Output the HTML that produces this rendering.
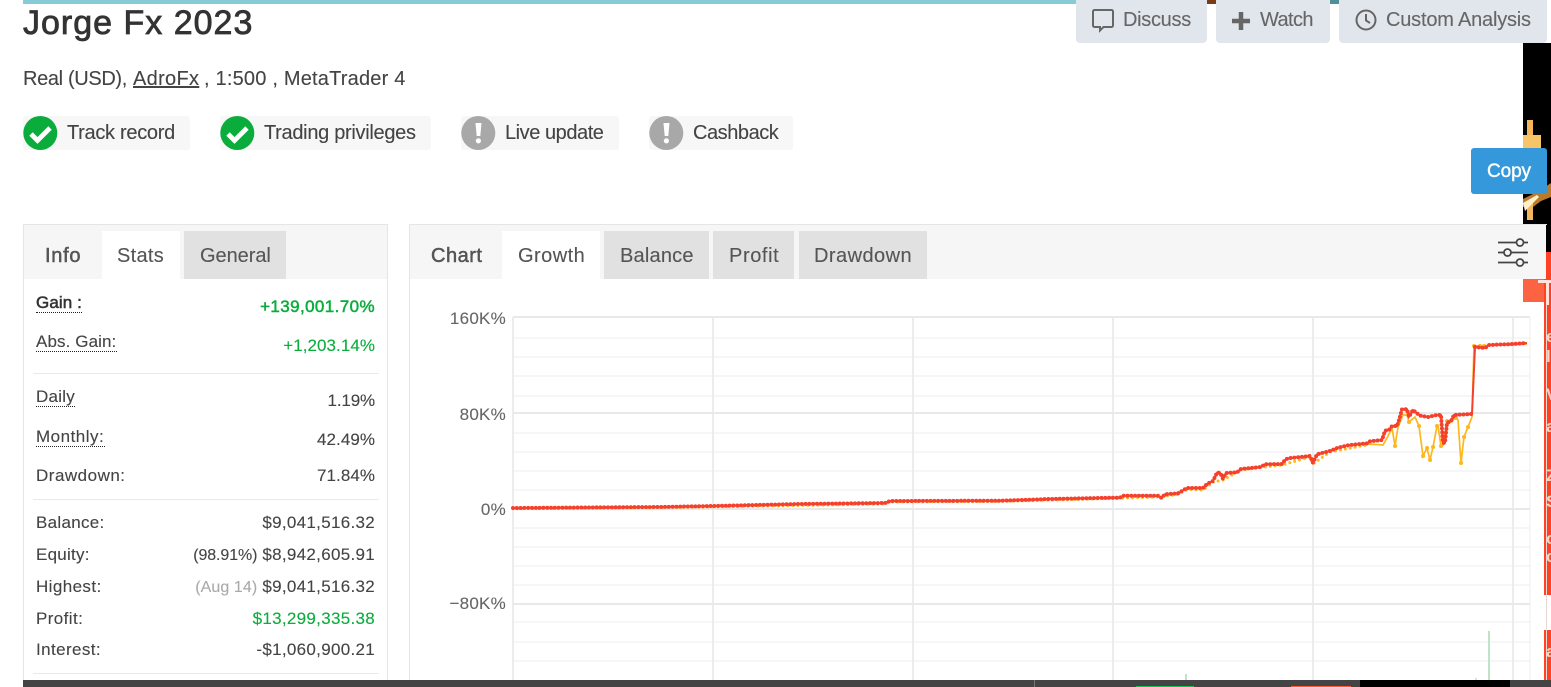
<!DOCTYPE html>
<html><head><meta charset="utf-8"><title>Jorge Fx 2023</title>
<style>
html,body{margin:0;padding:0;background:#fff}
body{width:1551px;height:687px;position:relative;overflow:hidden;font-family:"Liberation Sans",sans-serif;color:#444}
.a{position:absolute}
.t{position:absolute;white-space:nowrap;line-height:24px;height:24px;font-size:17px;letter-spacing:.25px;-webkit-text-stroke:.12px currentColor}
.r{text-align:right}
.m{-webkit-text-stroke:.5px currentColor}
.u{position:absolute;height:0;border-top:1.5px dotted #222}
.g{color:#0aad3c}
.btn{position:absolute;top:-4px;height:47px;background:#e1e6ec;border-radius:4px}
.bt{color:#666;font-size:20px}
.pill{position:absolute;top:116px;height:34px;background:#f7f7f7;border-radius:3px}
.ic{position:absolute;top:116px}
.tab{position:absolute;top:231px;height:48px}
.tl{font-size:20px;color:#555}
.hr{position:absolute;height:1px;background:#e9e9e9;left:33px;width:346px}
.yl{color:#666;font-size:17px;right:1045px}
.lt{position:absolute;left:0;font-size:17px;line-height:18px;color:#ffd0c0;font-weight:bold}
</style></head><body>

<!-- top strip -->
<div class="a" style="left:23px;top:0;width:1053px;height:4px;background:#86ccd6"></div>
<div class="a" style="left:1207px;top:0;width:9px;height:4px;background:#7a3b17"></div>
<div class="a" style="left:1330px;top:0;width:9px;height:4px;background:#4f8f96"></div>

<!-- right ad strip -->
<div class="a" style="left:1523px;top:43px;width:28px;height:209px;background:#000"></div>
<div class="a" style="left:1523px;top:252px;width:28px;height:50px;background:#fc6343"></div>
<div class="a" style="left:1544px;top:252px;width:7px;height:343px;background:#ff4322"></div>
<div class="a" style="left:1544px;top:630px;width:7px;height:50px;background:#ff4322"></div>
<div class="a" style="left:1546px;top:302px;width:5px;height:378px;overflow:hidden">
  <div class="lt" style="top:26px">e</div>
  <div class="lt" style="top:46px">l</div>
  <div class="lt" style="top:84px">V</div>
  <div class="lt" style="top:116px">a</div>
  <div class="lt" style="top:165px">Z</div>
  <div class="lt" style="top:191px">S</div>
  <div class="lt" style="top:228px">o</div>
  <div class="lt" style="top:246px">c</div>
  <div class="lt" style="top:341px">a</div>
</div>
<div class="a" style="left:1546px;top:302px;width:1px;height:378px;background:#e8d8d4"></div>
<div class="a" style="left:1538px;top:280px;width:13px;height:3px;background:#ffe3da"></div>
<div class="a" style="left:1546px;top:280px;width:3px;height:25px;background:#ffe3da"></div>
<!-- candles -->
<svg class="a" style="left:1523px;top:115px" width="28" height="110" viewBox="0 0 28 110">
<path d="M4 5h6v15H4z" fill="#f3b65a"/>
<path d="M0 20h18v16H0z" fill="#f8c468"/>
<path d="M28 68L16 76L0 84V92H4V105H10V92L18 86L28 82z" fill="#b97a2a"/>
<path d="M4 88H10V105H4z" fill="#f3b65a"/>
<path d="M0 88L14 80L16 82L2 96z" fill="#fff0c8"/>
</svg>

<!-- title -->
<div class="t" style="left:23px;top:2px;height:42px;line-height:42px;font-size:34px;color:#333;letter-spacing:1px;-webkit-text-stroke:.8px #333">Jorge Fx 2023</div>
<div class="t" style="left:23px;top:67px;font-size:20px;color:#444;letter-spacing:-.35px">Real (USD),</div>
<div class="t" style="left:133px;top:67px;font-size:20px;color:#444;letter-spacing:.3px;text-decoration:underline">AdroFx</div>
<div class="t" style="left:204px;top:67px;font-size:20px;color:#444;letter-spacing:.2px">, 1:500 , MetaTrader 4</div>

<!-- buttons -->
<div class="btn" style="left:1076px;width:131px"></div>
<div class="btn" style="left:1216px;width:114px"></div>
<div class="btn" style="left:1339px;width:208px"></div>
<svg class="a" style="left:1090px;top:7px" width="26" height="26" viewBox="0 0 26 26"><path d="M4.500 3h17a1.500 1.500 0 0 1 1.500 1.500v14a1.500 1.500 0 0 1-1.500 1.500H13.500l-3.500 3.500V20H4.500A1.500 1.500 0 0 1 3 18.500v-14A1.500 1.500 0 0 1 4.500 3z" fill="none" stroke="#666" stroke-width="2"/></svg>
<div class="t bt" style="left:1123px;top:8px;letter-spacing:-.3px">Discuss</div>
<svg class="a" style="left:1231px;top:10.500px" width="20" height="20" viewBox="0 0 20 20"><path d="M10 1v18M1 10h18" stroke="#666" stroke-width="4.500" fill="none"/></svg>
<div class="t bt" style="left:1260px;top:8px;letter-spacing:-.6px">Watch</div>
<svg class="a" style="left:1354px;top:8px" width="24" height="24" viewBox="0 0 24 24"><circle cx="12" cy="12" r="9.500" fill="none" stroke="#666" stroke-width="2"/><path d="M12 6v6.500l4 2.500" fill="none" stroke="#666" stroke-width="2"/></svg>
<div class="t bt" style="left:1386px;top:8px;letter-spacing:-.2px">Custom Analysis</div>

<!-- copy -->
<div class="a" style="left:1471px;top:148px;width:76px;height:46px;background:#3498db;border-radius:3px"></div>
<div class="t" style="left:1487px;top:160px;font-size:19px;color:#fff;letter-spacing:-.1px;-webkit-text-stroke:.4px #fff">Copy</div>

<!-- badges -->
<div class="pill" style="left:23px;width:167px"></div>
<div class="pill" style="left:220px;width:211px"></div>
<div class="pill" style="left:461px;width:158px"></div>
<div class="pill" style="left:649px;width:144px"></div>
<svg class="ic" style="left:23px" width="35" height="35" viewBox="0 0 35 35"><circle cx="17.300" cy="17" r="17" fill="#0aad3c"/><path d="M8 18l6.500 6.500L27 12" fill="none" stroke="#fff" stroke-width="4.800"/></svg>
<svg class="ic" style="left:220px" width="35" height="35" viewBox="0 0 35 35"><circle cx="17.300" cy="17" r="17" fill="#0aad3c"/><path d="M8 18l6.500 6.500L27 12" fill="none" stroke="#fff" stroke-width="4.800"/></svg>
<svg class="ic" style="left:461px" width="35" height="35" viewBox="0 0 35 35"><circle cx="17.300" cy="17" r="17" fill="#a8a8a8"/><path d="M14.500 7h6l-1.200 13h-3.600z" fill="#fff"/><circle cx="17.400" cy="24.800" r="2.600" fill="#fff"/></svg>
<svg class="ic" style="left:649px" width="35" height="35" viewBox="0 0 35 35"><circle cx="17.300" cy="17" r="17" fill="#a8a8a8"/><path d="M14.500 7h6l-1.200 13h-3.600z" fill="#fff"/><circle cx="17.400" cy="24.800" r="2.600" fill="#fff"/></svg>
<div class="t" style="left:67px;top:121px;font-size:20px;letter-spacing:-.3px">Track record</div>
<div class="t" style="left:264px;top:121px;font-size:20px;letter-spacing:-.3px">Trading privileges</div>
<div class="t" style="left:505px;top:121px;font-size:20px;letter-spacing:-.45px">Live update</div>
<div class="t" style="left:693px;top:121px;font-size:20px;letter-spacing:-.45px">Cashback</div>

<!-- left panel -->
<div class="a" style="left:23px;top:224px;width:363px;height:460px;border:1px solid #e5e5e5;background:#fff"></div>
<div class="a" style="left:24px;top:225px;width:363px;height:54px;background:#f6f6f6"></div>
<div class="tab" style="left:102px;width:78px;background:#fff"></div>
<div class="tab" style="left:184px;width:102px;background:#e1e1e1"></div>
<div class="t tl m" style="left:45px;top:244px;letter-spacing:.7px">Info</div>
<div class="t tl" style="left:117px;top:244px;letter-spacing:.3px">Stats</div>
<div class="t tl" style="left:200px;top:244px;letter-spacing:-.05px">General</div>

<div class="t" style="left:36px;top:291px;color:#333;letter-spacing:.1px;-webkit-text-stroke:.55px #333">Gain :</div>
<div class="u" style="left:36px;top:312px;width:46px"></div>
<div class="t r g m" style="right:1176px;top:295px;letter-spacing:.4px">+139,001.70%</div>
<div class="t" style="left:36px;top:330px;letter-spacing:.1px">Abs. Gain:</div>
<div class="u" style="left:36px;top:351px;width:81px"></div>
<div class="t r g" style="right:1176px;top:334px;letter-spacing:.05px">+1,203.14%</div>
<div class="hr" style="top:373px"></div>
<div class="t" style="left:36px;top:385px">Daily</div>
<div class="u" style="left:36px;top:406px;width:39px"></div>
<div class="t r" style="right:1176px;top:389px;letter-spacing:-.15px">1.19%</div>
<div class="t" style="left:36px;top:425px;letter-spacing:.5px">Monthly:</div>
<div class="u" style="left:36px;top:446px;width:69px"></div>
<div class="t r" style="right:1176px;top:428px;letter-spacing:.05px">42.49%</div>
<div class="t" style="left:36px;top:464px;letter-spacing:.5px">Drawdown:</div>
<div class="t r" style="right:1176px;top:464px;letter-spacing:.05px">71.84%</div>
<div class="hr" style="top:499px"></div>
<div class="t" style="left:36px;top:511px;letter-spacing:.3px">Balance:</div>
<div class="t r" style="right:1176px;top:511px;letter-spacing:.3px">$9,041,516.32</div>
<div class="t" style="left:36px;top:543px">Equity:</div>
<div class="t r" style="right:1176px;top:543px;letter-spacing:.3px"><span style="font-size:16px;letter-spacing:-.1px">(98.91%)</span> $8,942,605.91</div>
<div class="t" style="left:36px;top:575px;letter-spacing:.4px">Highest:</div>
<div class="t r" style="right:1176px;top:575px;letter-spacing:.3px"><span style="font-size:16px;letter-spacing:.1px;color:#aaa">(Aug 14)</span> $9,041,516.32</div>
<div class="t" style="left:36px;top:607px;letter-spacing:.4px">Profit:</div>
<div class="t r g" style="right:1176px;top:607px;letter-spacing:.3px">$13,299,335.38</div>
<div class="t" style="left:36px;top:638px;letter-spacing:.4px">Interest:</div>
<div class="t r" style="right:1176px;top:638px;letter-spacing:.3px">-$1,060,900.21</div>
<div class="hr" style="top:673px"></div>

<!-- chart panel -->
<div class="a" style="left:409px;top:224px;width:1137px;height:460px;border-left:1px solid #e5e5e5;border-top:1px solid #e5e5e5"></div>
<div class="a" style="left:410px;top:225px;width:1136px;height:54px;background:#f6f6f6"></div>
<div class="tab" style="left:502px;width:98px;background:#fff"></div>
<div class="tab" style="left:604px;width:105px;background:#e1e1e1"></div>
<div class="tab" style="left:713px;width:81px;background:#e1e1e1"></div>
<div class="tab" style="left:799px;width:128px;background:#e1e1e1"></div>
<div class="t tl m" style="left:431px;top:244px;letter-spacing:.5px">Chart</div>
<div class="t tl" style="left:518px;top:244px;letter-spacing:.45px">Growth</div>
<div class="t tl" style="left:620px;top:244px;letter-spacing:.2px">Balance</div>
<div class="t tl" style="left:729px;top:244px;letter-spacing:.6px">Profit</div>
<div class="t tl" style="left:814px;top:244px;letter-spacing:.45px">Drawdown</div>
<svg class="a" style="left:1496px;top:235.500px" width="36" height="32" viewBox="0 0 36 32" fill="none" stroke="#444" stroke-width="1.700"><path d="M2 6.500h18.500M27.500 6.500h4.500M2 16.500h6M15 16.500h17M2 26.500h18.500M27.500 26.500h4.500"/><circle cx="24" cy="6.500" r="3.500"/><circle cx="11.500" cy="16.500" r="3.500"/><circle cx="24" cy="26.500" r="3.500"/></svg>

<div class="t r yl" style="top:307px">160K%</div>
<div class="t r yl" style="top:403px">80K%</div>
<div class="t r yl" style="top:498px">0%</div>
<div class="t r yl" style="top:592px">−80K%</div>

<svg class="a" style="left:0;top:0" width="1551" height="680" viewBox="0 0 1551 680" fill="none">
<g stroke="#f6f6f6" stroke-width="2"><path d="M513 338H1530M513 357H1530M513 376H1530M513 396H1530M513 433H1530M513 452H1530M513 471H1530M513 490H1530M513 528H1530M513 547H1530M513 566H1530M513 585H1530M513 622H1530M513 642H1530M513 661H1530"/></g>
<g stroke="#ececec" stroke-width="2"><path d="M513 317V680M713 317V680M913 317V680M1113 317V680M1313 317V680M1513 317V680"/></g>
<path d="M513 317H1530M513 413H1530M513 509H1530M513 604H1530" stroke="#e9e9e9" stroke-width="2"/>
<path d="M1530 317V680" stroke="#efefef" stroke-width="1"/>
<path d="M1186 680V674M1489 680V631" stroke="#bfe3c8" stroke-width="2"/>
<path d="M1476 680V678" stroke="#cfe6d5" stroke-width="2"/>

<!-- yellow halo of the red series -->
<path d="M513 508.800L713 507L885 504L890 502L1000 501.500L1113 498.500L1158 497L1178 494.500L1187 489.500L1203 490L1213 482L1223 480L1241 470L1282 465L1310 457L1313 464L1330 452L1367 445" stroke="#fdb81e" stroke-width="3" stroke-linecap="round" stroke-dasharray="0 5"/>

<path d="M1367 444L1383 445L1387 438L1392 428L1395 446L1398 427L1403 415L1407 415L1409 422L1415 417L1419 426L1423 456L1427 448L1430 460L1433 447L1437 426L1438 426L1441 446L1443 445L1447 421L1451 421L1456 418L1458 420L1461 463L1464 437L1468 427L1472 417L1474 346L1485 346L1489 345L1513 345L1527 344" stroke="#fdb81e" stroke-width="1.700"/>
<path d="M1395 446h.1M1423 456h.1M1427 448h.1M1430 460h.1M1433 447h.1M1437 426h.1M1441 446h.1M1447 421h.1M1451 421h.1M1456 418h.1M1461 463h.1M1464 437h.1M1468 427h.1M1419 426h.1M1409 422h.1M1474 346h.1M1480 346h.1M1484 346h.1" stroke="#fdb81e" stroke-width="4" stroke-linecap="round"/>

<path d="M513 508L660 507L713 506L800 504L885 503L890 501L1000 500.700L1050 499L1113 497.700L1120 497.700L1122.700 495.700L1158 495.700L1161.700 498L1165 494.300L1178 493.300L1187 488L1203 488L1207 484L1213 481L1217 472.700L1220 472.700L1223 478.700L1226 473L1237 472.300L1241 469L1261 467L1265 464.300L1282 464L1285 460L1288 458.300L1310 456L1313 462.700L1317 454.300L1330 451L1338 447.700L1348 445.300L1367 443.300L1370 441.300L1382 440L1385 430.700L1389 430L1392 426L1397 426L1399 420L1402 409.300L1407 409.300L1409 416.700L1413 410L1420 415.700L1428 417L1437 415L1441 415L1443 443L1445 442.700L1447 423L1451 421L1454 415L1472 414L1475 347L1485 348L1489 345L1513 344L1527 343" stroke="#f4402c" stroke-width="2"/>
<path d="M513 508L660 507L713 506L800 504L885 503L890 501L1000 500.700L1050 499L1113 497.700L1120 497.700L1122.700 495.700L1158 495.700L1161.700 498L1165 494.300L1178 493.300L1187 488L1203 488L1207 484L1213 481L1217 472.700L1220 472.700L1223 478.700L1226 473L1237 472.300L1241 469L1261 467L1265 464.300L1282 464L1285 460L1288 458.300L1310 456L1313 462.700L1317 454.300L1330 451L1338 447.700L1348 445.300L1367 443.300L1370 441.300L1382 440L1385 430.700L1389 430L1392 426L1397 426L1399 420L1402 409.300L1407 409.300L1409 416.700L1413 410L1420 415.700L1428 417L1437 415L1441 415L1443 443L1445 442.700L1447 423L1451 421L1454 415L1472 414" stroke="#f4402c" stroke-width="4" stroke-linecap="round" stroke-dasharray="0 3.800"/>
<path d="M1475 347L1485 348L1489 345L1513 344L1527 343" stroke="#f4402c" stroke-width="4" stroke-linecap="round" stroke-dasharray="0 3.800"/>
</svg>

<!-- bottom bar -->
<div class="a" style="left:23px;top:680px;width:1528px;height:7px;background:#444"></div>
<div class="a" style="left:1034px;top:680px;width:1px;height:7px;background:#777"></div>
<div class="a" style="left:1136px;top:686px;width:58px;height:1px;background:#0fc452"></div>
<div class="a" style="left:1291px;top:686px;width:60px;height:1px;background:#ff5a30"></div>
<div class="a" style="left:1360px;top:680px;width:150px;height:7px;background:#000"></div>
</body></html>
